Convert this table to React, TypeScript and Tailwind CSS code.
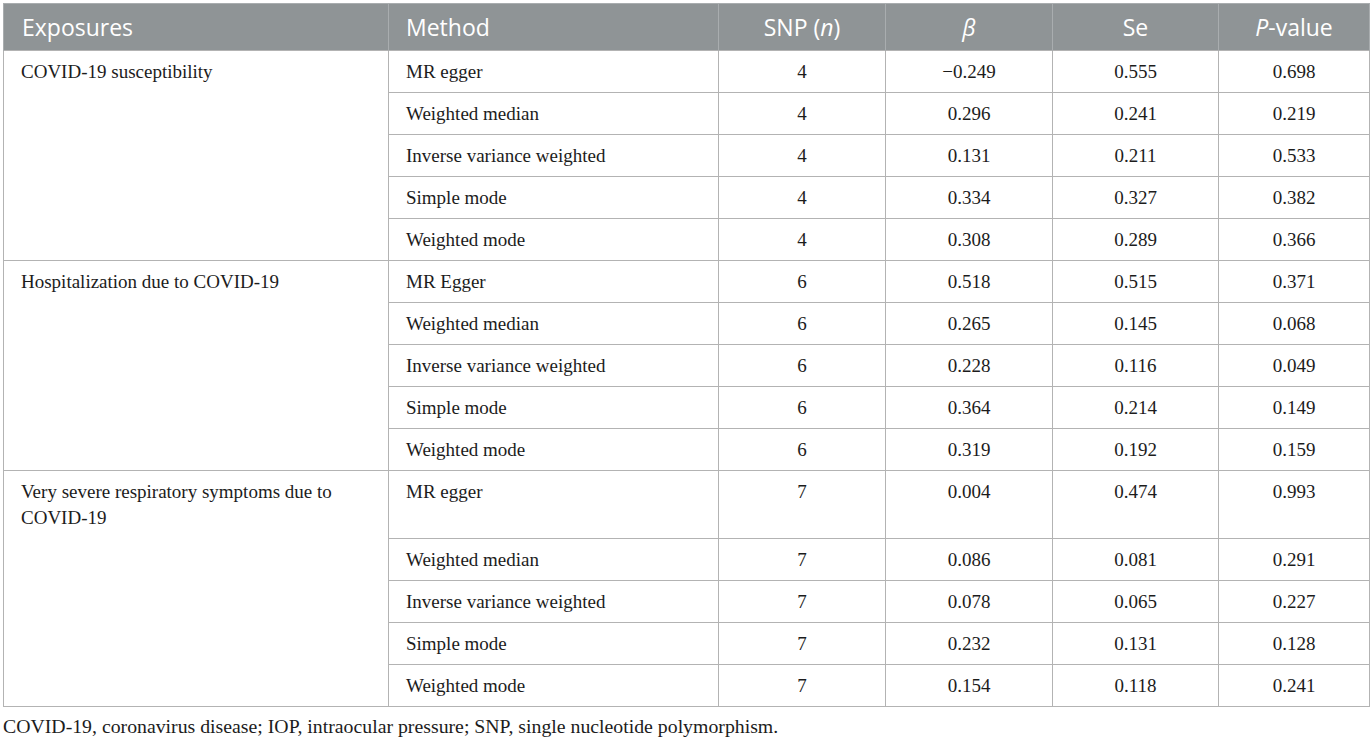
import React from "react";

type Row = { m: string; n: string; b: string; se: string; p: string };
const groups: { exp: string; tall: boolean; rows: Row[] }[] = [
  {
    exp: "COVID-19 susceptibility",
    tall: false,
    rows: [
      { m: "MR egger", n: "4", b: "\u22120.249", se: "0.555", p: "0.698" },
      { m: "Weighted median", n: "4", b: "0.296", se: "0.241", p: "0.219" },
      { m: "Inverse variance weighted", n: "4", b: "0.131", se: "0.211", p: "0.533" },
      { m: "Simple mode", n: "4", b: "0.334", se: "0.327", p: "0.382" },
      { m: "Weighted mode", n: "4", b: "0.308", se: "0.289", p: "0.366" },
    ],
  },
  {
    exp: "Hospitalization due to COVID-19",
    tall: false,
    rows: [
      { m: "MR Egger", n: "6", b: "0.518", se: "0.515", p: "0.371" },
      { m: "Weighted median", n: "6", b: "0.265", se: "0.145", p: "0.068" },
      { m: "Inverse variance weighted", n: "6", b: "0.228", se: "0.116", p: "0.049" },
      { m: "Simple mode", n: "6", b: "0.364", se: "0.214", p: "0.149" },
      { m: "Weighted mode", n: "6", b: "0.319", se: "0.192", p: "0.159" },
    ],
  },
  {
    exp: "Very severe respiratory symptoms due to COVID-19",
    tall: true,
    rows: [
      { m: "MR egger", n: "7", b: "0.004", se: "0.474", p: "0.993" },
      { m: "Weighted median", n: "7", b: "0.086", se: "0.081", p: "0.291" },
      { m: "Inverse variance weighted", n: "7", b: "0.078", se: "0.065", p: "0.227" },
      { m: "Simple mode", n: "7", b: "0.232", se: "0.131", p: "0.128" },
      { m: "Weighted mode", n: "7", b: "0.154", se: "0.118", p: "0.241" },
    ],
  },
];

const tdBase = "border border-[#b3b3b3] align-top pt-[8px] leading-[26px]";
const th = "border-x border-[#a9adaf] font-normal py-[9px] leading-[28px] text-white";

export default function App() {
  return (
    <div className="w-[1372px] h-[737px] bg-white pt-[3px] pl-[3px]">
      <table
        className="table-fixed border-collapse w-[1366px] text-[19px] text-[#1c1c1c]"
        style={{ fontFamily: '"Liberation Serif", "Times New Roman", serif' }}
      >
        <colgroup>
          <col className="w-[385px]" />
          <col className="w-[330px]" />
          <col className="w-[167px]" />
          <col className="w-[167px]" />
          <col className="w-[166px]" />
          <col className="w-[151px]" />
        </colgroup>
        <thead>
          <tr
            className="bg-[#8f9496] text-[23px] border border-[#a9adaf]"
            style={{ fontFamily: '"Open Sans", "Noto Sans", sans-serif' }}
          >
            <th className={`${th} text-left pl-[18px]`}>Exposures</th>
            <th className={`${th} text-left pl-[17px]`}>Method</th>
            <th className={`${th} text-center`}>
              SNP (<i>n</i>)
            </th>
            <th className={`${th} text-center`}>
              <i>β</i>
            </th>
            <th className={`${th} text-center`}>Se</th>
            <th className={`${th} text-center`}>
              <i>P</i>-value
            </th>
          </tr>
        </thead>
        <tbody>
          {groups.map((g) =>
            g.rows.map((r, i) => {
              const td = `${tdBase} ${g.tall && i === 0 ? "pb-[33px]" : "pb-[7px]"}`;
              return (
                <tr key={g.exp + i}>
                  {i === 0 && (
                    <td rowSpan={5} className={`${tdBase} pb-[7px] pl-[17px] pr-[30px]`}>
                      {g.exp}
                    </td>
                  )}
                  <td className={`${td} pl-[17px]`}>{r.m}</td>
                  <td className={`${td} text-center`}>{r.n}</td>
                  <td className={`${td} text-center`}>{r.b}</td>
                  <td className={`${td} text-center`}>{r.se}</td>
                  <td className={`${td} text-center`}>{r.p}</td>
                </tr>
              );
            })
          )}
        </tbody>
      </table>
      <div
        className="mt-[7px] text-[19.8px] text-[#1c1c1c] leading-[24px]"
        style={{ fontFamily: '"Liberation Serif", "Times New Roman", serif' }}
      >
        COVID-19, coronavirus disease; IOP, intraocular pressure; SNP, single nucleotide polymorphism.
      </div>
    </div>
  );
}
